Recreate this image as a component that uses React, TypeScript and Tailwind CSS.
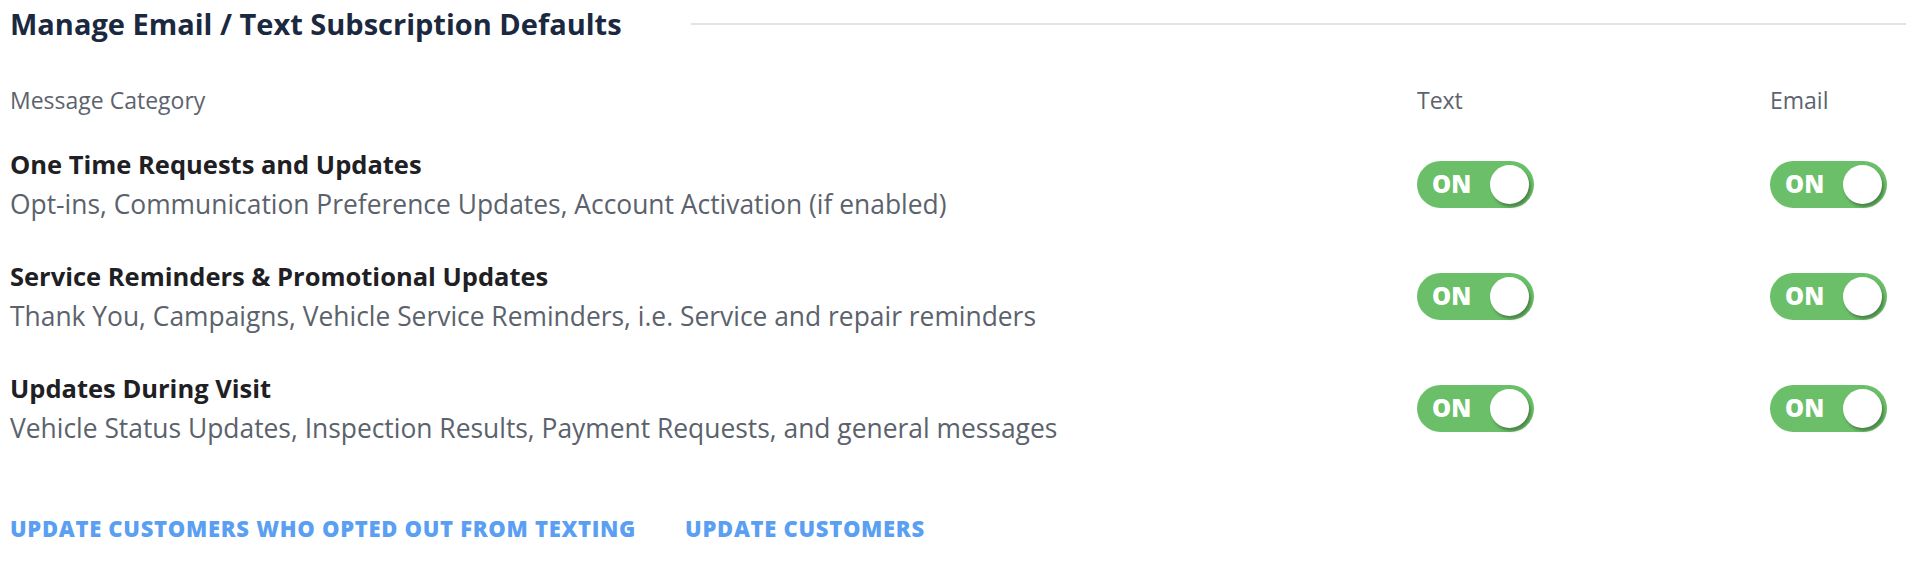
import React, { useState } from 'react';

type Category = {
    id: string;
    title: string;
    description: string;
};

const categories: Category[] = [
    {
        id: 'one-time',
        title: 'One Time Requests and Updates',
        description: 'Opt-ins, Communication Preference Updates, Account Activation (if enabled)',
    },
    {
        id: 'reminders',
        title: 'Service Reminders & Promotional Updates',
        description: 'Thank You, Campaigns, Vehicle Service Reminders, i.e. Service and repair reminders',
    },
    {
        id: 'visit',
        title: 'Updates During Visit',
        description: 'Vehicle Status Updates, Inspection Results, Payment Requests, and general messages',
    },
];

const Toggle: React.FC<{ on: boolean; onChange: () => void }> = ({ on, onChange }) => (
    <button
        type="button"
        onClick={onChange}
        className={`relative flex items-center w-[117px] h-[47px] rounded-full ${on ? 'bg-[#6bbf68]' : 'bg-[#c9ced6]'}`}
    >
        <span className={`absolute top-1/2 -translate-y-1/2 text-white font-extrabold text-[24px] ${on ? 'left-[15px]' : 'right-[14px]'}`}>
            {on ? 'ON' : 'OFF'}
        </span>
        <span
            className={`absolute top-[4px] w-[39px] h-[39px] rounded-full bg-white shadow-[2px_3px_3px_rgba(0,0,0,0.3)] ${on ? 'right-[5px]' : 'left-[5px]'}`}
        />
    </button>
);

export default function App() {
    const [prefs, setPrefs] = useState<Record<string, { text: boolean; email: boolean }>>({
        'one-time': { text: true, email: true },
        reminders: { text: true, email: true },
        visit: { text: true, email: true },
    });

    const flip = (id: string, key: 'text' | 'email') => {
        setPrefs(p => ({ ...p, [id]: { ...p[id], [key]: !p[id][key] } }));
    };

    return (
        <div className="w-[1906px] h-[568px] bg-white pl-[10px] font-['Open_Sans',sans-serif]">
            <div className="flex items-center h-12">
                <h1 className="text-[29px] font-bold text-[#1b2940] whitespace-nowrap">Manage Email / Text Subscription Defaults</h1>
                <div className="flex-1 h-[2px] bg-[#e1e3e7] ml-[69px]" />
            </div>

            <div className="grid grid-cols-[1fr_353px_136px] mt-[38px] h-[28px] leading-[28px] text-[23px] text-[#5d636d]">
                <div>Message Category</div>
                <div>Text</div>
                <div>Email</div>
            </div>

            <div className="mt-[35px] flex flex-col gap-[42px]">
                {categories.map(c => (
                    <div key={c.id} className="grid grid-cols-[1fr_353px_136px] items-center">
                        <div>
                            <div className="text-[25.5px] leading-[30px] font-bold text-[#1e2024]">{c.title}</div>
                            <div className="mt-[10px] text-[26.4px] leading-[30px] text-[#5b626c]">{c.description}</div>
                        </div>
                        <div>
                            <Toggle on={prefs[c.id].text} onChange={() => flip(c.id, 'text')} />
                        </div>
                        <div>
                            <Toggle on={prefs[c.id].email} onChange={() => flip(c.id, 'email')} />
                        </div>
                    </div>
                ))}
            </div>

            <div className="flex gap-[49px] mt-[71px] h-[28px] items-center">
                <button type="button" className="text-[22px] font-extrabold uppercase text-[#5a9ff2] tracking-[0.7px]">Update customers who opted out from texting</button>
                <button type="button" className="text-[22px] font-extrabold uppercase text-[#5a9ff2] tracking-[0.7px]">Update customers</button>
            </div>
        </div>
    );
}
